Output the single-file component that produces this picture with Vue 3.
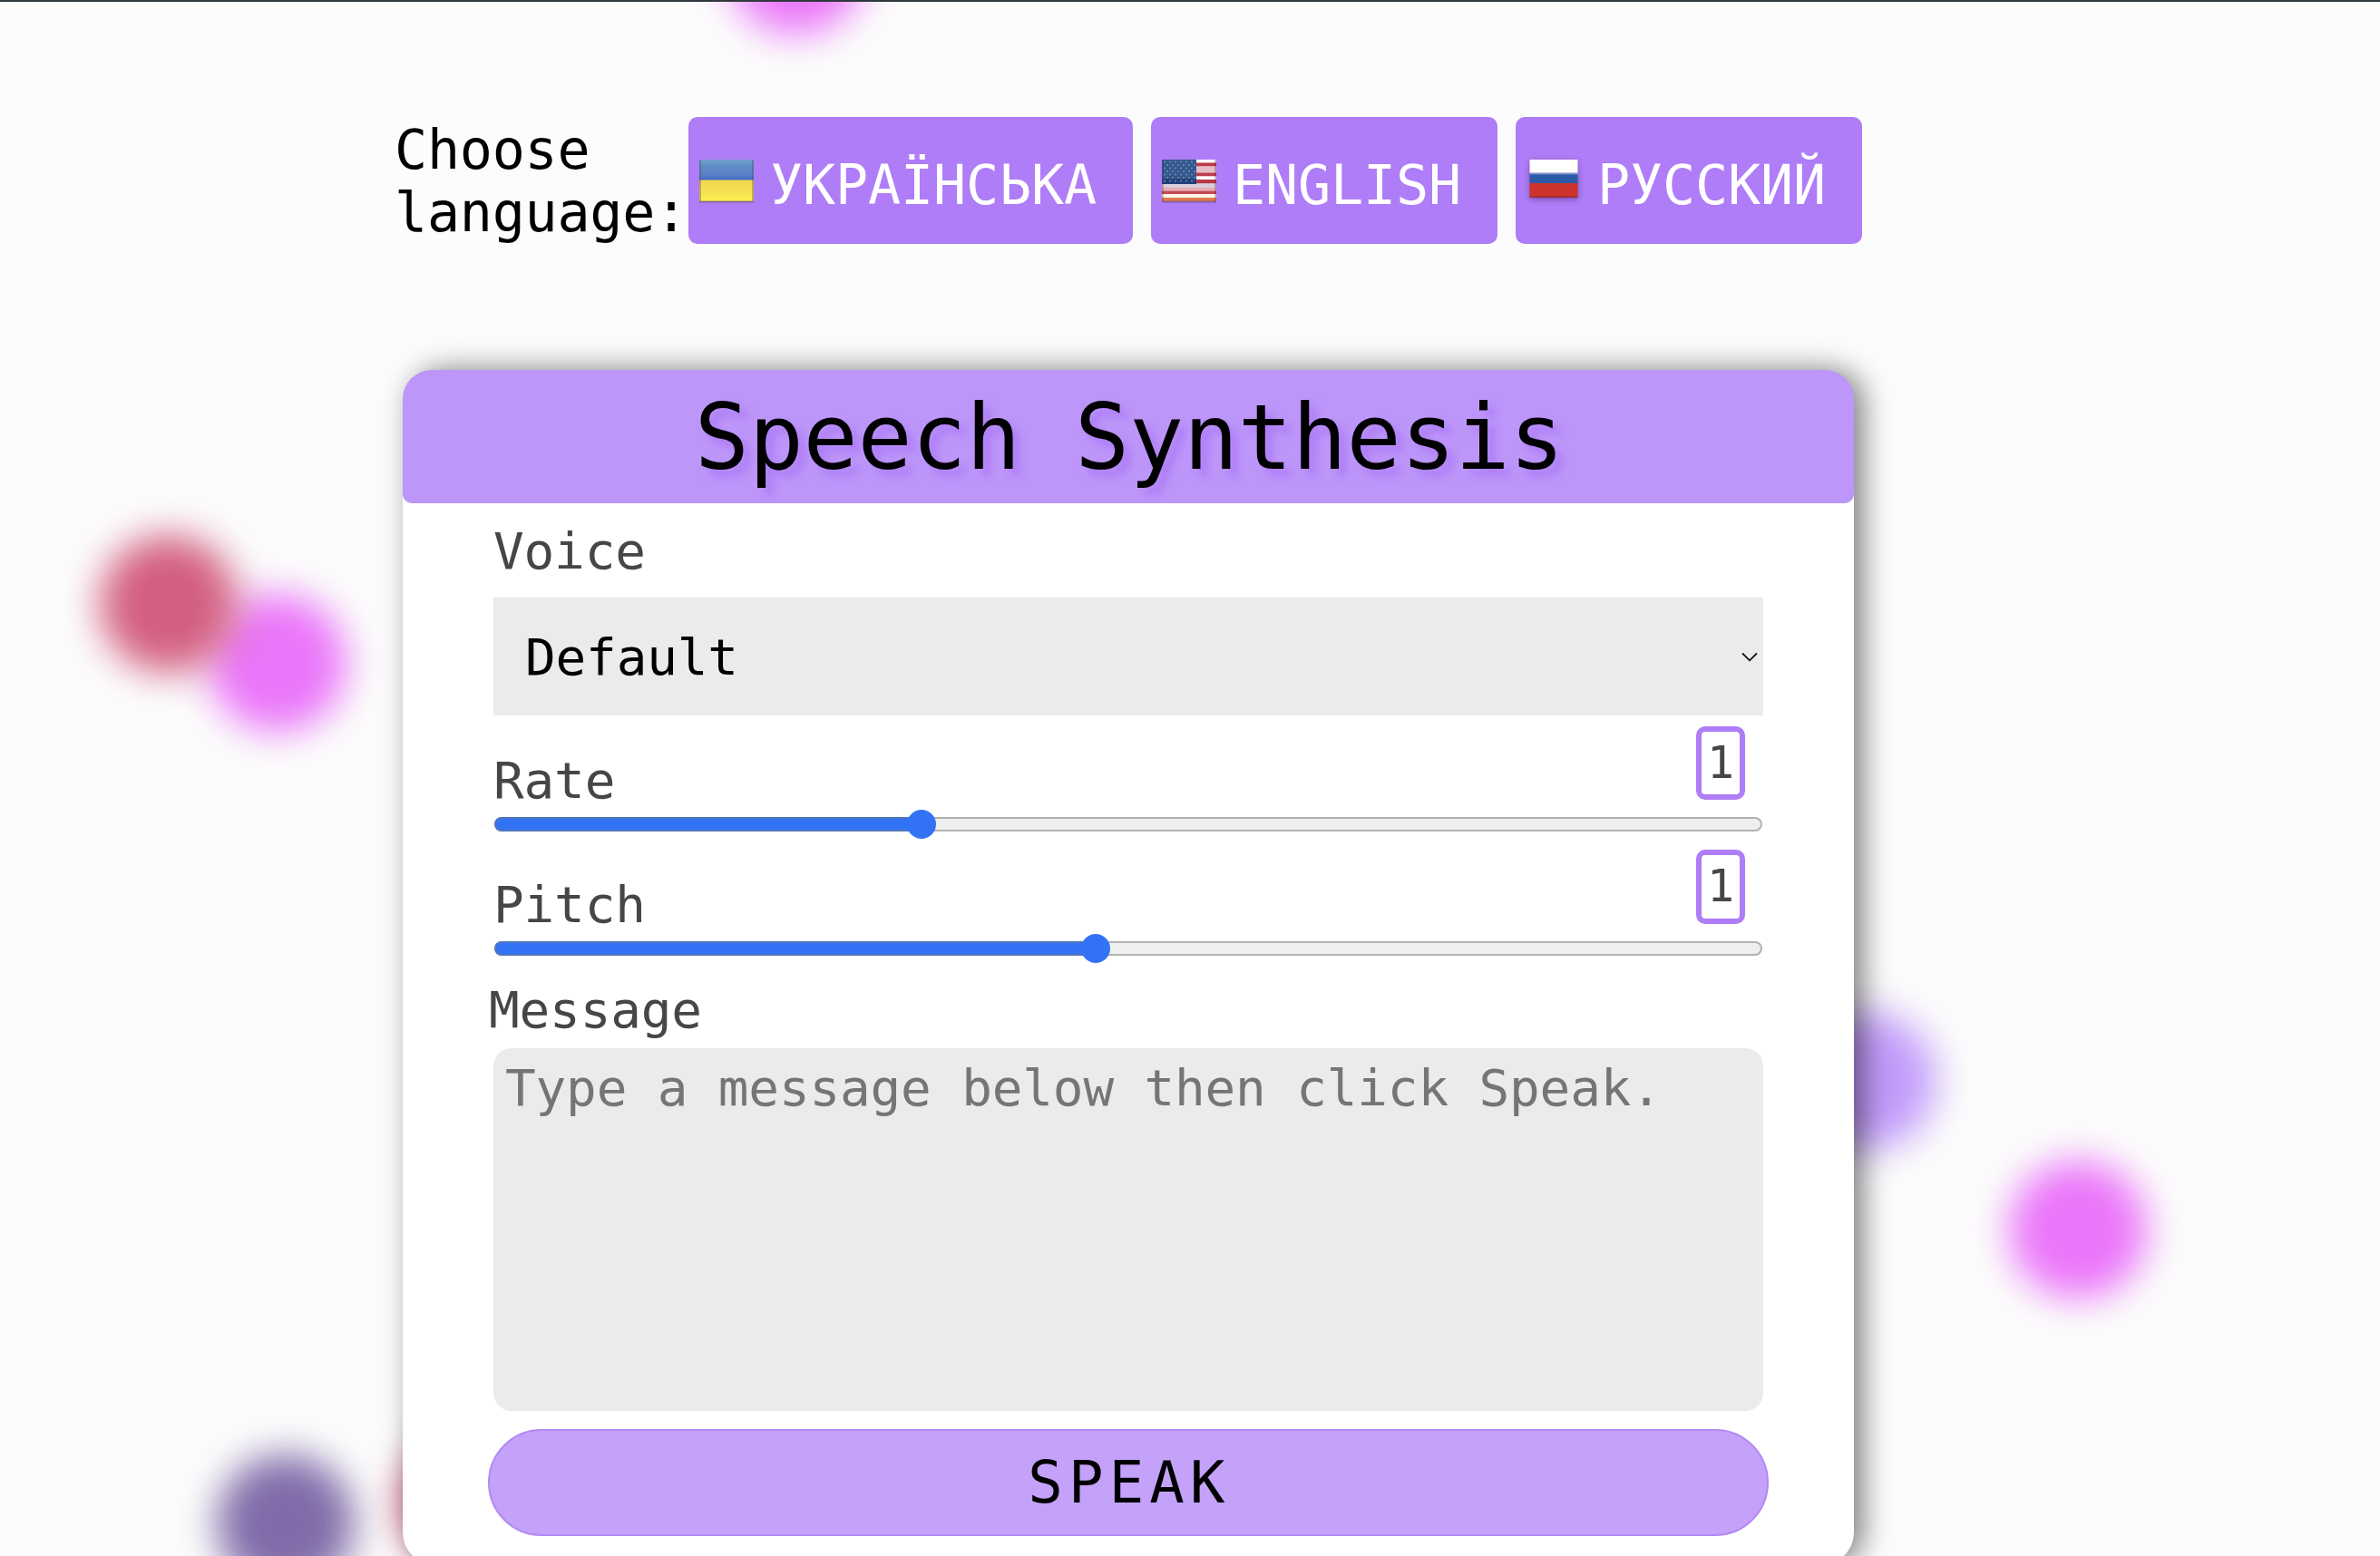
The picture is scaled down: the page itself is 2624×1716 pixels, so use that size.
<template>
  <div class="page">
    <div v-for="(b, i) in bubbles" :key="i" class="bubble" :style="{ left: b.x - 76 + 'px', top: b.y - 78 + 'px', background: b.color }"></div>

    <div class="lang-bar">
      <div class="lang-label">Choose language:</div>
      <button v-for="l in langs" :key="l.code" class="lang-btn" @click="lang = l.code">
        <svg v-if="l.code === 'ua'" class="flag" viewBox="0 0 60 50">
          <defs>
            <linearGradient id="uaBlue" x1="0" y1="0" x2="0" y2="1"><stop offset="0" stop-color="#6fa0cc" /><stop offset=".35" stop-color="#5f8bc9" /><stop offset=".7" stop-color="#5a83c6" /><stop offset="1" stop-color="#3f69c6" /></linearGradient>
            <linearGradient id="uaYellow" x1="0" y1="0" x2="0" y2="1"><stop offset="0" stop-color="#f0d84e" /><stop offset=".5" stop-color="#f6e052" /><stop offset="1" stop-color="#fbee50" /></linearGradient>
          </defs>
          <rect y="1" width="60" height="23" fill="url(#uaBlue)" />
          <rect y="23.5" width="60" height="23.5" fill="url(#uaYellow)" />
          <path d="M1 1V47M59 1V47" stroke="#4a4a50" stroke-opacity=".35" stroke-width="2" />
          <path d="M0 47.5H60" stroke="#6b5560" stroke-opacity=".6" stroke-width="2" />
        </svg>
        <svg v-else-if="l.code === 'en'" class="flag" viewBox="0 0 60 50">
          <rect y="1" width="60" height="46" fill="#f7e8ea" />
          <rect v-for="(s, i) in stripes" :key="i" :y="s.y" width="60" :height="s.h" :fill="s.c" />
          <rect y="1" width="38" height="27" fill="#34588c" />
          <rect y="22" width="38" height="6" fill="#233f7a" />
          <g fill="#7592b8">
            <template v-for="r in 7" :key="r">
              <circle v-for="c in 6" :key="c" :cx="c * 6 - (r % 2 ? 3 : 0)" :cy="r * 3.5" r=".9" />
            </template>
          </g>
          <path d="M1 1V47M59 1V47" stroke="#4a3048" stroke-opacity=".3" stroke-width="2" />
          <path d="M0 47.5H60" stroke="#6b4a70" stroke-opacity=".6" stroke-width="2" />
        </svg>
        <svg v-else class="flag flag-ru" viewBox="0 0 60 50">
          <rect x="3.5" y="1" width="53" height="16" fill="#fff" />
          <rect x="3.5" y="16" width="53" height="12" fill="#2b5ba7" />
          <rect x="3.5" y="27" width="53" height="16" fill="#cc332d" />
          <path d="M3.5 16.5H56.5" stroke="#7d8fc4" stroke-width="2" />
          <path d="M3.5 42.2H56.5" stroke="#962c34" stroke-width="1.5" />
        </svg>
        <span>{{ l.name }}</span>
      </button>
    </div>

    <div class="card">
      <h1 class="card-title">Speech Synthesis</h1>
      <div class="card-body">
        <label class="label voice-label">Voice</label>
        <div class="select-wrap">
          <select v-model="voice" class="select">
            <option value="default">Default</option>
          </select>
          <svg class="chevron" viewBox="0 0 18 12"><path d="M1 1.5L9 9.3L17 1.5" fill="none" stroke="#111" stroke-width="1.8" /></svg>
        </div>

        <template v-for="s in sliders" :key="s.name">
          <div class="slider-head" :class="s.cls">
            <label class="label">{{ s.name }}</label>
            <output class="value">{{ s.value }}</output>
          </div>
          <div class="track">
            <div class="fill" :style="{ width: fillWidth(s) + 'px' }"></div>
            <div class="thumb" :style="{ left: fillWidth(s) - 18 + 'px' }"></div>
          </div>
        </template>

        <label class="label message-label">Message</label>
        <textarea v-model="message" class="message" placeholder="Type a message below then click Speak."></textarea>
        <button class="speak">SPEAK</button>
      </div>
    </div>
  </div>
</template>

<script setup>
import { ref } from 'vue'

const lang = ref('en')
const voice = ref('default')
const message = ref('')

const langs = [
  { code: 'ua', name: 'УКРАЇНСЬКА' },
  { code: 'en', name: 'ENGLISH' },
  { code: 'ru', name: 'РУССКИЙ' },
]

const stripes = [
  { y: 1, h: 3.5, c: '#fff' }, { y: 4.5, h: 4, c: '#b93848' }, { y: 8.5, h: 7, c: '#e6bcc8' }, { y: 15.5, h: 4, c: '#bb3c4a' },
  { y: 19.5, h: 3.5, c: '#fff' }, { y: 23, h: 4.5, c: '#b93848' }, { y: 27.5, h: 4, c: '#d6d0dc' },
  { y: 31.5, h: 4, c: '#e3adb8' }, { y: 35.5, h: 3.5, c: '#bf4b50' }, { y: 39, h: 4, c: '#fff4ea' },
  { y: 43, h: 4, c: '#e07a48' },
]

const sliders = ref([
  { name: 'Rate', value: 1, min: 0.5, max: 2, cls: 'rate' },
  { name: 'Pitch', value: 1, min: 0.1, max: 2, cls: 'pitch' },
])

// distance from the track start to the thumb centre
function fillWidth(s) {
  return Math.round(15 + ((s.value - s.min) / (s.max - s.min)) * 1368)
}

const bubbles = [
  { x: 878, y: -38, color: '#ea76f9' },
  { x: 306, y: 731, color: '#ea76f9' },
  { x: 186, y: 666, color: '#d35f81' },
  { x: 2058, y: 1192, color: '#c19bfa' },
  { x: 2291, y: 1356, color: '#ea76f9' },
  { x: 517, y: 1656, color: '#d35f81' },
  { x: 315, y: 1680, color: '#816ca9' },
]
</script>

<style>
body { margin:0;background:#fcfcfc }
</style>

<style scoped>
.page { position:relative;box-sizing:border-box;width:2624px;height:1716px;padding-top:127px;border-top:2px solid #2f393d;background:#fcfcfc;overflow:hidden;font-family:"DejaVu Sans Mono","Liberation Mono",monospace }
.bubble { position:absolute;width:152px;height:152px;border-radius:50%;filter:blur(21px) }

.lang-bar { position:relative;display:flex;align-items:center;gap:20px;height:140px;margin-left:435px }
.lang-label { width:325px;margin-right:-21px;padding-top:2px;font-size:60px;line-height:69px;letter-spacing:-0.004em;color:#000 }
.lang-btn { display:flex;align-items:center;box-sizing:border-box;height:140px;padding:0 39px 0 12px;border:none;border-radius:10px;background:#ae7df7;color:#fff;font:inherit;font-size:60px;letter-spacing:-0.002em;cursor:pointer }
.lang-btn span { margin-left:-1px;margin-right:1px;padding-top:10px;white-space:nowrap }
.flag { width:60px;height:50px;margin:2px 19px 0 0;flex:none }
.flag-ru { filter:drop-shadow(0 2px 3px rgba(60,20,90,0.45)) }

.card { position:relative;width:1600px;height:1318px;margin:139px 0 0 444px;border-radius:36px;background:#fff;box-shadow:10px 0 32px rgba(0,0,0,0.5) }
.card-title { margin:0;padding-left:2px;height:147px;line-height:149px;border-radius:32px 32px 10px 10px;background:#bc96f9;text-align:center;font-size:100px;font-weight:400;letter-spacing:-0.003em;color:#000;text-shadow:8px 8px 8px #ae7df7 }
.card-body { padding:16px 100px 0 }
.label { display:block;font-size:56px;line-height:74px;letter-spacing:-0.003em;color:#464646 }
.voice-label { margin-bottom:14px }

.select-wrap { position:relative }
.select { display:block;appearance:none;box-sizing:border-box;width:1400px;height:130px;padding:0 35px;border:none;border-radius:0;background:#ebebeb;color:#000;font:inherit;font-size:56px;letter-spacing:-0.003em }
.chevron { position:absolute;right:6px;top:60px;width:18px;height:12px }

.slider-head { display:flex;justify-content:space-between;align-items:flex-end;box-sizing:border-box;padding:0 20px 3px 0 }
.rate { height:112px }
.pitch { height:121px }
.value { box-sizing:border-box;width:54px;height:81px;margin-bottom:16px;border:6px solid #ae7df7;border-radius:10px;text-align:center;font-size:50px;line-height:69px;color:#464646 }
.pitch .value { height:82px }
.track { position:relative;box-sizing:border-box;height:16px;margin:0 1px;border:2px solid #b2b2b2;border-radius:8px;background:#efefef }
.fill { position:absolute;left:-2px;top:-2px;box-sizing:border-box;height:16px;border:2px solid #5077b8;border-right:none;border-radius:8px 0 0 8px;background:#3273f6 }
.thumb { position:absolute;top:-10px;width:32px;height:32px;border-radius:50%;background:#3273f6 }

.message-label { margin:23px 0 5px -5px }
.message { display:block;box-sizing:border-box;width:1400px;height:400px;padding:7px 12px 9px 13px;border:none;border-radius:20px;background:#ebebeb;outline:none;resize:none;color:#000;font:inherit;font-size:56px;line-height:74px;letter-spacing:-0.003em }
.message::placeholder { color:#757575 }
.speak { display:block;box-sizing:border-box;width:1412px;height:118px;margin:20px 0 0 -6px;padding:0 0 0 2px;border:2px solid #b289f3;border-radius:59px;background:#c4a2fa;color:#000;font:inherit;font-size:64px;letter-spacing:6.2px;cursor:pointer }
</style>
